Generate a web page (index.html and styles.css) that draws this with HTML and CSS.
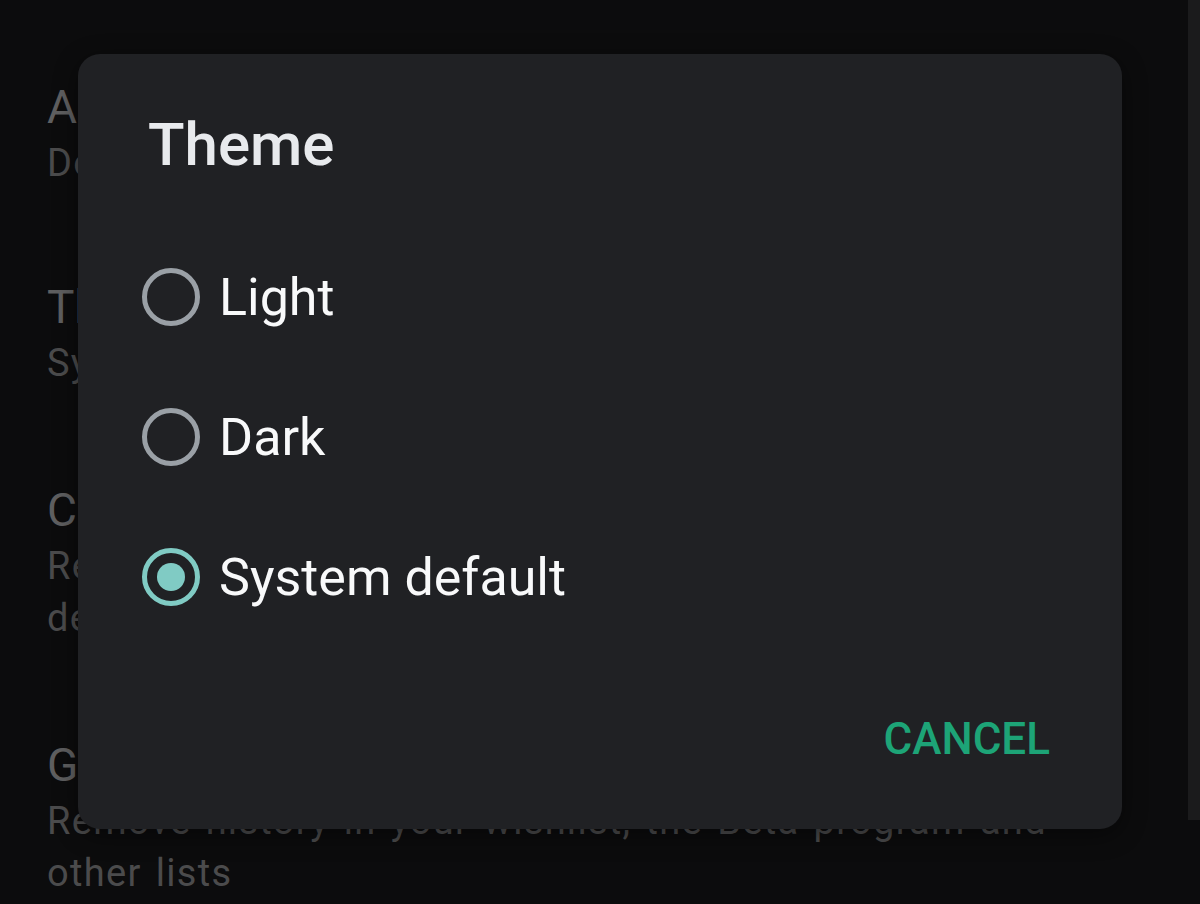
FILE: index.html
```html
<!DOCTYPE html>
<html lang="en">
<head>
    <meta charset="UTF-8">
    <title>Settings - Theme</title>
    <meta name="viewport" content="width=device-width, initial-scale=1.0">
    <link rel="stylesheet" href="styles.css">
</head>
<body>
    <div class="settings">
        <div class="item">
            <div class="item-title">Auto-update apps</div>
            <div class="item-summary">Don't auto-update apps</div>
        </div>
        <div class="item">
            <div class="item-title">Theme</div>
            <div class="item-summary">System default</div>
        </div>
        <div class="item">
            <div class="item-title">Clear device search history</div>
            <div class="item-summary">Remove searches that you have performed from this device</div>
        </div>
        <div class="item">
            <div class="item-title">General history</div>
            <div class="item-summary">Remove history in your wishlist, the Beta program and other lists</div>
        </div>
    </div>
    <div class="side-strip"></div>

    <div class="dialog">
        <h1 class="dialog-title">Theme</h1>
        <div class="options">
            <div class="option">
                <span class="radio"></span>
                <span class="option-label">Light</span>
            </div>
            <div class="option">
                <span class="radio"></span>
                <span class="option-label">Dark</span>
            </div>
            <div class="option">
                <span class="radio checked"></span>
                <span class="option-label">System default</span>
            </div>
        </div>
        <div class="actions">
            <span class="btn-text">CANCEL</span>
        </div>
    </div>
</body>
</html>
```
FILE: styles.css
```css
body {
    font-family: Roboto, 'Noto Sans', sans-serif;
    margin: 0;
    padding: 0;
    width: 1200px;
    height: 904px;
    overflow: hidden;
    background-color: #0c0c0d;
    position: relative;
}

/* settings list behind the dialog */
.settings {
    padding: 33px 60px 0 47px;
}

.item {
    padding: 47px 0;
}

.item:first-child {
    padding-bottom: 44px;
}

.item-title {
    font-size: 46px;
    line-height: 54px;
    color: #5f5f60;
    white-space: nowrap;
}

.item-summary {
    max-width: 1040px;
    margin-top: 3px;
    font-size: 38px;
    line-height: 52px;
    letter-spacing: 1.3px;
    word-spacing: 3.5px;
    color: #4b4b4c;
}

.side-strip {
    position: absolute;
    top: 0;
    right: 0;
    width: 12px;
    height: 820px;
    background-color: #1b1b1c;
}

/* dialog */
.dialog {
    position: absolute;
    left: 78px;
    top: 54px;
    width: 1044px;
    height: 775px;
    background-color: #202124;
    border-radius: 22px;
    box-shadow: 0 6px 24px rgba(0, 0, 0, 0.45);
    display: flex;
    flex-direction: column;
}

.dialog-title {
    margin: 0;
    padding: 55px 70px 0 70px;
    font-size: 60px;
    line-height: 72px;
    font-weight: 500;
    color: #e8eaed;
}

.options {
    display: flex;
    flex-direction: column;
    padding: 46px 64px 0 64px;
}

.option {
    display: flex;
    align-items: center;
    gap: 19px;
    height: 140px;
}

.radio {
    box-sizing: border-box;
    width: 58px;
    height: 58px;
    border: 5px solid #9aa0a6;
    border-radius: 50%;
    display: flex;
    align-items: center;
    justify-content: center;
}

.radio.checked {
    border-color: #80cbc4;
}

.radio.checked::after {
    content: '';
    width: 28px;
    height: 28px;
    border-radius: 50%;
    background-color: #80cbc4;
}

.option-label {
    font-size: 52px;
    color: #f8f9fa;
}

.actions {
    margin-top: auto;
    display: flex;
    justify-content: flex-end;
    padding: 0 72px 64px 0;
}

.btn-text {
    font-size: 44px;
    font-weight: 500;
    color: #1da477;
}
```
